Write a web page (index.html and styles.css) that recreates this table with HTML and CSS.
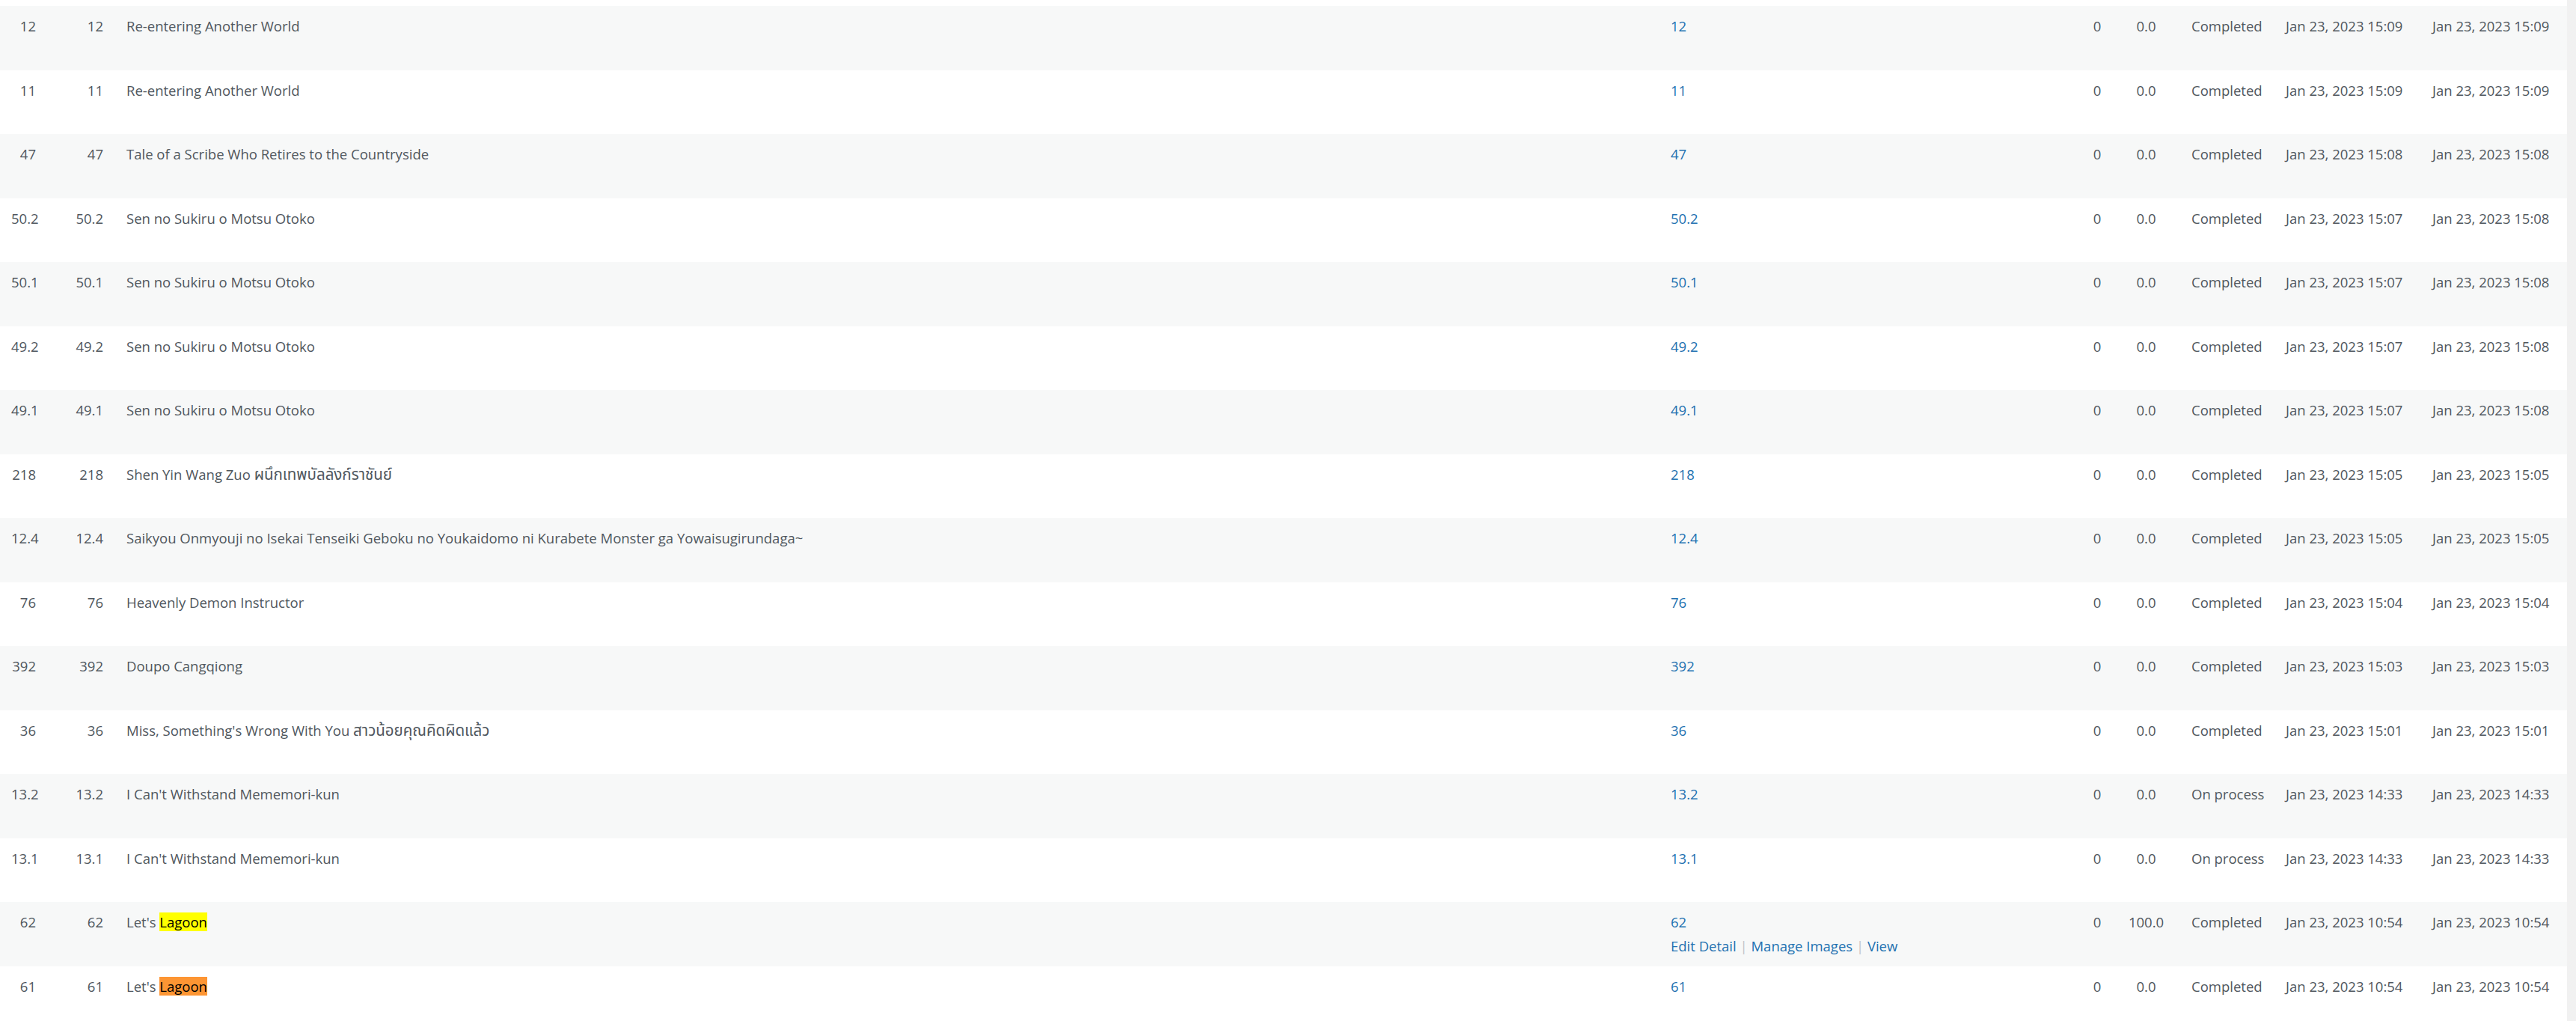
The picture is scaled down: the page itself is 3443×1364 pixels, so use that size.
FILE: index.html
```html
<!DOCTYPE html>
<html lang="en">
<head>
<meta charset="utf-8">
<title>Chapters</title>
<link rel="stylesheet" href="styles.css">
</head>
<body>
<div class="screen">
  <div class="content">
    <table class="list-table">
      <colgroup>
        <col class="c-num">
        <col class="c-ch">
        <col class="c-title">
        <col class="c-chap">
        <col class="c-img">
        <col class="c-rate">
        <col class="c-status">
        <col class="c-date">
        <col class="c-date2">
      </colgroup>
      <tbody>
        <tr><td class="num">12</td><td class="num">12</td><td>Re-entering Another World</td><td><a href="#">12</a><div class="row-actions"><a href="#">Edit Detail</a><span class="sep"> | </span><a href="#">Manage Images</a><span class="sep"> | </span><a href="#">View</a></div></td><td class="ctr">0</td><td class="rate">0.0</td><td>Completed</td><td>Jan 23, 2023 15:09</td><td>Jan 23, 2023 15:09</td></tr>
        <tr><td class="num">11</td><td class="num">11</td><td>Re-entering Another World</td><td><a href="#">11</a><div class="row-actions"><a href="#">Edit Detail</a><span class="sep"> | </span><a href="#">Manage Images</a><span class="sep"> | </span><a href="#">View</a></div></td><td class="ctr">0</td><td class="rate">0.0</td><td>Completed</td><td>Jan 23, 2023 15:09</td><td>Jan 23, 2023 15:09</td></tr>
        <tr><td class="num">47</td><td class="num">47</td><td>Tale of a Scribe Who Retires to the Countryside</td><td><a href="#">47</a><div class="row-actions"><a href="#">Edit Detail</a><span class="sep"> | </span><a href="#">Manage Images</a><span class="sep"> | </span><a href="#">View</a></div></td><td class="ctr">0</td><td class="rate">0.0</td><td>Completed</td><td>Jan 23, 2023 15:08</td><td>Jan 23, 2023 15:08</td></tr>
        <tr><td class="num">50.2</td><td class="num">50.2</td><td>Sen no Sukiru o Motsu Otoko</td><td><a href="#">50.2</a><div class="row-actions"><a href="#">Edit Detail</a><span class="sep"> | </span><a href="#">Manage Images</a><span class="sep"> | </span><a href="#">View</a></div></td><td class="ctr">0</td><td class="rate">0.0</td><td>Completed</td><td>Jan 23, 2023 15:07</td><td>Jan 23, 2023 15:08</td></tr>
        <tr><td class="num">50.1</td><td class="num">50.1</td><td>Sen no Sukiru o Motsu Otoko</td><td><a href="#">50.1</a><div class="row-actions"><a href="#">Edit Detail</a><span class="sep"> | </span><a href="#">Manage Images</a><span class="sep"> | </span><a href="#">View</a></div></td><td class="ctr">0</td><td class="rate">0.0</td><td>Completed</td><td>Jan 23, 2023 15:07</td><td>Jan 23, 2023 15:08</td></tr>
        <tr><td class="num">49.2</td><td class="num">49.2</td><td>Sen no Sukiru o Motsu Otoko</td><td><a href="#">49.2</a><div class="row-actions"><a href="#">Edit Detail</a><span class="sep"> | </span><a href="#">Manage Images</a><span class="sep"> | </span><a href="#">View</a></div></td><td class="ctr">0</td><td class="rate">0.0</td><td>Completed</td><td>Jan 23, 2023 15:07</td><td>Jan 23, 2023 15:08</td></tr>
        <tr><td class="num">49.1</td><td class="num">49.1</td><td>Sen no Sukiru o Motsu Otoko</td><td><a href="#">49.1</a><div class="row-actions"><a href="#">Edit Detail</a><span class="sep"> | </span><a href="#">Manage Images</a><span class="sep"> | </span><a href="#">View</a></div></td><td class="ctr">0</td><td class="rate">0.0</td><td>Completed</td><td>Jan 23, 2023 15:07</td><td>Jan 23, 2023 15:08</td></tr>
        <tr><td class="num">218</td><td class="num">218</td><td>Shen Yin Wang Zuo <span class="th" lang="th">ผนึกเทพบัลลังก์ราชันย์</span></td><td><a href="#">218</a><div class="row-actions"><a href="#">Edit Detail</a><span class="sep"> | </span><a href="#">Manage Images</a><span class="sep"> | </span><a href="#">View</a></div></td><td class="ctr">0</td><td class="rate">0.0</td><td>Completed</td><td>Jan 23, 2023 15:05</td><td>Jan 23, 2023 15:05</td></tr>
        <tr><td class="num">12.4</td><td class="num">12.4</td><td>Saikyou Onmyouji no Isekai Tenseiki Geboku no Youkaidomo ni Kurabete Monster ga Yowaisugirundaga~</td><td><a href="#">12.4</a><div class="row-actions"><a href="#">Edit Detail</a><span class="sep"> | </span><a href="#">Manage Images</a><span class="sep"> | </span><a href="#">View</a></div></td><td class="ctr">0</td><td class="rate">0.0</td><td>Completed</td><td>Jan 23, 2023 15:05</td><td>Jan 23, 2023 15:05</td></tr>
        <tr><td class="num">76</td><td class="num">76</td><td>Heavenly Demon Instructor</td><td><a href="#">76</a><div class="row-actions"><a href="#">Edit Detail</a><span class="sep"> | </span><a href="#">Manage Images</a><span class="sep"> | </span><a href="#">View</a></div></td><td class="ctr">0</td><td class="rate">0.0</td><td>Completed</td><td>Jan 23, 2023 15:04</td><td>Jan 23, 2023 15:04</td></tr>
        <tr><td class="num">392</td><td class="num">392</td><td>Doupo Cangqiong</td><td><a href="#">392</a><div class="row-actions"><a href="#">Edit Detail</a><span class="sep"> | </span><a href="#">Manage Images</a><span class="sep"> | </span><a href="#">View</a></div></td><td class="ctr">0</td><td class="rate">0.0</td><td>Completed</td><td>Jan 23, 2023 15:03</td><td>Jan 23, 2023 15:03</td></tr>
        <tr><td class="num">36</td><td class="num">36</td><td>Miss, Something's Wrong With You <span class="th" lang="th">สาวน้อยคุณคิดผิดแล้ว</span></td><td><a href="#">36</a><div class="row-actions"><a href="#">Edit Detail</a><span class="sep"> | </span><a href="#">Manage Images</a><span class="sep"> | </span><a href="#">View</a></div></td><td class="ctr">0</td><td class="rate">0.0</td><td>Completed</td><td>Jan 23, 2023 15:01</td><td>Jan 23, 2023 15:01</td></tr>
        <tr><td class="num">13.2</td><td class="num">13.2</td><td>I Can't Withstand Mememori-kun</td><td><a href="#">13.2</a><div class="row-actions"><a href="#">Edit Detail</a><span class="sep"> | </span><a href="#">Manage Images</a><span class="sep"> | </span><a href="#">View</a></div></td><td class="ctr">0</td><td class="rate">0.0</td><td>On process</td><td>Jan 23, 2023 14:33</td><td>Jan 23, 2023 14:33</td></tr>
        <tr><td class="num">13.1</td><td class="num">13.1</td><td>I Can't Withstand Mememori-kun</td><td><a href="#">13.1</a><div class="row-actions"><a href="#">Edit Detail</a><span class="sep"> | </span><a href="#">Manage Images</a><span class="sep"> | </span><a href="#">View</a></div></td><td class="ctr">0</td><td class="rate">0.0</td><td>On process</td><td>Jan 23, 2023 14:33</td><td>Jan 23, 2023 14:33</td></tr>
        <tr class="hover"><td class="num">62</td><td class="num">62</td><td>Let's <mark class="hl-yellow">Lagoon</mark></td><td><a href="#">62</a><div class="row-actions"><a href="#">Edit Detail</a><span class="sep"> | </span><a href="#">Manage Images</a><span class="sep"> | </span><a href="#">View</a></div></td><td class="ctr">0</td><td class="rate">100.0</td><td>Completed</td><td>Jan 23, 2023 10:54</td><td>Jan 23, 2023 10:54</td></tr>
        <tr><td class="num">61</td><td class="num">61</td><td>Let's <mark class="hl-orange">Lagoon</mark></td><td><a href="#">61</a><div class="row-actions"><a href="#">Edit Detail</a><span class="sep"> | </span><a href="#">Manage Images</a><span class="sep"> | </span><a href="#">View</a></div></td><td class="ctr">0</td><td class="rate">0.0</td><td>Completed</td><td>Jan 23, 2023 10:54</td><td>Jan 23, 2023 10:54</td></tr>
      </tbody>
    </table>
  </div>
  <div class="scrollbar"></div>
</div>
</body>
</html>
```
FILE: styles.css
```css
html, body {
  margin: 0;
  padding: 0;
  background: #ffffff;
  height: 100%;
  overflow: hidden;
}

body {
  font-family: "Open Sans", "Noto Sans Thai", "Loma", sans-serif;
  font-size: 18.5px;
  line-height: 29.25px;
  color: #50575e;
}

.screen {
  display: flex;
  height: 1364px;
  overflow: hidden;
}

.content {
  flex: 1;
  padding-top: 8px;
  min-width: 0;
}

.scrollbar {
  width: 12px;
  flex: none;
  background: #f1f1f1;
}

.list-table {
  width: 100%;
  table-layout: fixed;
  border-collapse: collapse;
  border-spacing: 0;
}

.c-num { width: 63px; }
.c-ch { width: 91px; }
.c-title { width: 2064px; }
.c-chap { width: 550px; }
.c-img { width: 70px; }
.c-rate { width: 76px; }
.c-status { width: 126px; }
.c-date { width: 196px; }
.c-date2 { width: auto; }

.list-table tbody tr:nth-child(odd) {
  background: #f7f8f8;
}

.list-table td {
  padding: 12px 15px;
  vertical-align: top;
  white-space: nowrap;
  overflow: visible;
}

.list-table td.num {
  text-align: right;
}

.list-table td:nth-child(2) {
  padding-right: 16px;
}

.list-table td.ctr {
  text-align: center;
}

.list-table td.rate {
  text-align: center;
  padding-left: 0;
  padding-right: 15px;
}

.th {
  font-family: "Noto Sans Thai", "Loma", sans-serif;
  font-size: 20.5px;
  line-height: 29.25px;
}

a {
  color: #2271b1;
  text-decoration: none;
}

.row-actions {
  padding-top: 3px;
  visibility: hidden;
}

.hover .row-actions {
  visibility: visible;
}

.sep {
  color: #c3c4c7;
}

mark {
  color: #000000;
  padding: 0;
}

.hl-yellow {
  background: #ffff00;
}

.hl-orange {
  background: #fd9533;
}
```
